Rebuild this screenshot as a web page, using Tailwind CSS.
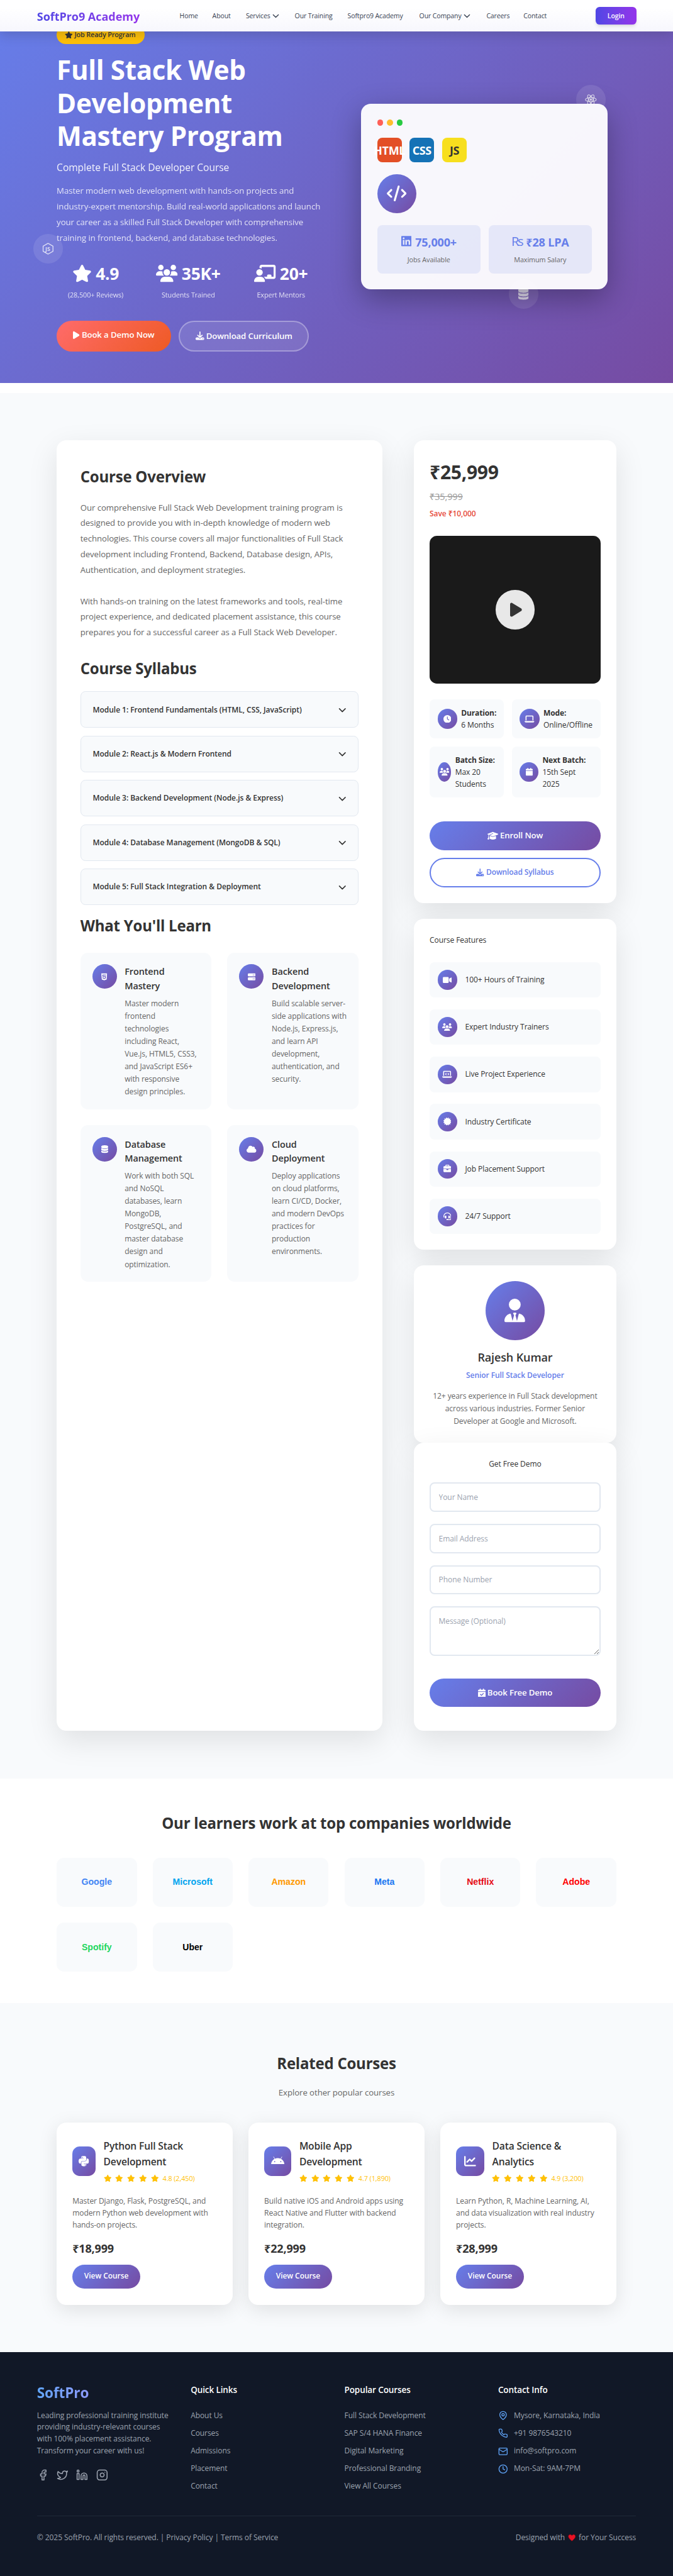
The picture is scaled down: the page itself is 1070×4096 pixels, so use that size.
<!DOCTYPE html>
<html lang="en" class="text-[12.5333px]">
<head>
<meta charset="utf-8">
<title>SoftPro9 Academy - Full Stack Web Development</title>
<script src="https://cdn.jsdelivr.net/npm/@tailwindcss/browser@4"></script>
</head>
<body class="bg-white font-['Open_Sans','Noto_Sans',sans-serif] text-[0.96rem] leading-6 tracking-[-0.006em] text-[#333] overflow-x-hidden">

<svg class="hidden">
  <symbol id="star" viewBox="0 0 576 512"><path d="M316.9 18C311.6 7 300.4 0 288.1 0s-23.4 7-28.8 18L195 150.3 51.4 171.5c-12 1.8-22 10.2-25.7 21.7s-.7 24.2 7.9 32.7L137.8 329 113.2 474.7c-2 12 3 24.2 12.9 31.3s23 8 33.8 2.3l128.3-68.5 128.3 68.5c10.8 5.7 23.9 4.9 33.8-2.3s14.9-19.3 12.9-31.3L438.5 329 542.7 225.9c8.6-8.5 11.7-21.2 7.9-32.7s-13.7-19.9-25.7-21.7L381.2 150.3 316.9 18z"/></symbol>
  <symbol id="users" viewBox="0 0 640 512"><path d="M144 0a80 80 0 1 1 0 160A80 80 0 1 1 144 0zM512 0a80 80 0 1 1 0 160A80 80 0 1 1 512 0zM0 298.7C0 239.8 47.8 192 106.7 192h42.7c15.9 0 31 3.5 44.6 9.7c-1.3 7.2-1.9 14.7-1.9 22.3c0 38.2 16.8 72.5 43.3 96c-.2 0-.4 0-.7 0H21.3C9.6 320 0 310.4 0 298.7zM405.3 320c-.2 0-.4 0-.7 0c26.6-23.5 43.3-57.8 43.3-96c0-7.6-.7-15-1.9-22.3c13.6-6.3 28.7-9.7 44.6-9.7h42.7C592.2 192 640 239.8 640 298.7c0 11.8-9.6 21.3-21.3 21.3H405.3zM224 224a96 96 0 1 1 192 0 96 96 0 1 1 -192 0zM128 485.3C128 411.7 187.7 352 261.3 352H378.7C452.3 352 512 411.7 512 485.3c0 14.7-11.9 26.7-26.7 26.7H154.7c-14.7 0-26.7-11.9-26.7-26.7z"/></symbol>
  <symbol id="teacher" viewBox="0 0 640 512"><path d="M160 64c0-35.3 28.7-64 64-64H576c35.3 0 64 28.7 64 64V352c0 35.3-28.7 64-64 64H336.8c-11.8-25.5-29.9-47.5-52.4-64H384V320c0-17.7 14.3-32 32-32h64c17.7 0 32 14.3 32 32v32h64V64L224 64v49.1C205.2 102.2 183.3 96 160 96V64zm0 64a96 96 0 1 1 0 192 96 96 0 1 1 0-192zM133.3 352h53.3C260.3 352 320 411.7 320 485.3c0 14.7-11.9 26.7-26.7 26.7H26.7C11.9 512 0 500.1 0 485.3C0 411.7 59.7 352 133.3 352z"/></symbol>
  <symbol id="play" viewBox="0 0 384 512"><path d="M73 39c-14.8-9.1-33.4-9.4-48.5-.9S0 62.6 0 80V432c0 17.4 9.4 33.4 24.5 41.9s33.7 8.1 48.5-.9L361 297c14.3-8.7 23-24.2 23-41s-8.7-32.2-23-41L73 39z"/></symbol>
  <symbol id="download" viewBox="0 0 512 512"><path d="M288 32c0-17.7-14.3-32-32-32s-32 14.3-32 32V274.7l-73.4-73.4c-12.5-12.5-32.8-12.5-45.3 0s-12.5 32.8 0 45.3l128 128c12.5 12.5 32.8 12.5 45.3 0l128-128c12.5-12.5 12.5-32.8 0-45.3s-32.8-12.5-45.3 0L288 274.7V32zM64 352c-35.3 0-64 28.7-64 64v32c0 35.3 28.7 64 64 64H448c35.3 0 64-28.7 64-64V416c0-35.3-28.7-64-64-64H346.5l-45.3 45.3c-25 25-65.5 25-90.5 0L165.5 352H64zm368 56a24 24 0 1 1 0 48 24 24 0 1 1 0-48z"/></symbol>
  <symbol id="code" viewBox="0 0 640 512"><path d="M392.8 1.2c-17-4.9-34.7 5-39.6 22l-128 448c-4.9 17 5 34.7 22 39.6s34.7-5 39.6-22l128-448c4.9-17-5-34.7-22-39.6zm80.6 120.1c-12.5 12.5-12.5 32.8 0 45.3L562.7 256l-89.4 89.4c-12.5 12.5-12.5 32.8 0 45.3s32.8 12.5 45.3 0l112-112c12.5-12.5 12.5-32.8 0-45.3l-112-112c-12.5-12.5-32.8-12.5-45.3 0zm-306.7 0c-12.5-12.5-32.8-12.5-45.3 0l-112 112c-12.5 12.5-12.5 32.8 0 45.3l112 112c12.5 12.5 32.8 12.5 45.3 0s12.5-32.8 0-45.3L77.3 256l89.4-89.4c12.5-12.5 12.5-32.8 0-45.3z"/></symbol>
  <symbol id="linkedin" viewBox="0 0 448 512"><path d="M416 32H31.9C14.3 32 0 46.5 0 64.3v383.4C0 465.5 14.3 480 31.9 480H416c17.6 0 32-14.5 32-32.3V64.3c0-17.8-14.4-32.3-32-32.3zM135.4 416H69V202.2h66.5V416zm-33.2-243c-21.3 0-38.5-17.3-38.5-38.5S80.9 96 102.2 96c21.2 0 38.5 17.3 38.5 38.5 0 21.3-17.2 38.5-38.5 38.5zm282.1 243h-66.4V312c0-24.8-.5-56.7-34.5-56.7-34.6 0-39.9 27-39.9 54.9V416h-66.4V202.2h63.7v29.2h.9c8.9-16.8 30.6-34.5 62.9-34.5 67.2 0 79.7 44.3 79.7 101.9V416z"/></symbol>
  <symbol id="clock" viewBox="0 0 512 512"><path fill-rule="evenodd" d="M256 0a256 256 0 1 1 0 512A256 256 0 1 1 256 0zM232 120V256c0 8 4 15.5 10.7 20l96 64c11 7.4 25.9 4.4 33.3-6.7s4.4-25.9-6.7-33.3L280 243.2V120c0-13.3-10.7-24-24-24s-24 10.7-24 24z"/></symbol>
  <symbol id="laptop" viewBox="0 0 640 512"><path d="M128 32C92.7 32 64 60.7 64 96V352h64V96H512V352h64V96c0-35.3-28.7-64-64-64H128zM19.2 384C8.6 384 0 392.6 0 403.2C0 445.6 34.4 480 76.8 480H563.2c42.4 0 76.8-34.4 76.8-76.8c0-10.6-8.6-19.2-19.2-19.2H19.2z"/></symbol>
  <symbol id="calendar" viewBox="0 0 448 512"><path d="M96 32V64H48C21.5 64 0 85.5 0 112v48H448V112c0-26.5-21.5-48-48-48H352V32c0-17.7-14.3-32-32-32s-32 14.3-32 32V64H160V32c0-17.7-14.3-32-32-32S96 14.3 96 32zM448 192H0V464c0 26.5 21.5 48 48 48H400c26.5 0 48-21.5 48-48V192z"/></symbol>
  <symbol id="calcheck" viewBox="0 0 448 512"><path fill-rule="evenodd" d="M96 32V64H48C21.5 64 0 85.5 0 112v48H448V112c0-26.5-21.5-48-48-48H352V32c0-17.7-14.3-32-32-32s-32 14.3-32 32V64H160V32c0-17.7-14.3-32-32-32S96 14.3 96 32zM448 192H0V464c0 26.5 21.5 48 48 48H400c26.5 0 48-21.5 48-48V192zM329 305c9.4-9.4 9.4-24.6 0-33.9s-24.6-9.4-33.9 0l-95 95-47-47c-9.4-9.4-24.6-9.4-33.9 0s-9.4 24.6 0 33.9l64 64c9.4 9.4 24.6 9.4 33.9 0L329 305z"/></symbol>
  <symbol id="cap" viewBox="0 0 640 512"><path d="M320 32c-8.1 0-16.1 1.4-23.7 4.1L15.8 137.4C6.3 140.9 0 149.9 0 160s6.3 19.1 15.8 22.6l57.9 20.9C57.3 229.3 48 259.8 48 291.9v28.1c0 28.4-10.8 57.7-22.3 80.8c-6.5 13-13.9 25.8-22.5 37.6C0 442.7-.9 448.3 .9 453.4s6 8.9 11.2 10.2l64 16c4.2 1.1 8.7 .3 12.4-2s6.3-6.1 7.1-10.4c8.6-42.8 4.3-81.2-2.1-108.7C90.3 344.3 86 329.8 80 316.5V291.9c0-30.2 10.2-58.7 27.9-81.5c12.9-15.5 29.6-28 49.2-35.7l157-61.7c8.2-3.2 17.5 .8 20.7 9s-.8 17.5-9 20.7l-157 61.7c-12.4 4.9-23.3 12.4-32.2 21.6l159.6 57.6c7.6 2.7 15.6 4.1 23.7 4.1s16.1-1.4 23.7-4.1L624.2 182.6c9.5-3.4 15.8-12.5 15.8-22.6s-6.3-19.1-15.8-22.6L343.7 36.1C336.1 33.4 328.1 32 320 32zM128 408c0 35.3 86 72 192 72s192-36.7 192-72L496.7 262.6 354.5 314c-11.1 4-22.8 6-34.5 6s-23.5-2-34.5-6L143.3 262.6 128 408z"/></symbol>
  <symbol id="video" viewBox="0 0 576 512"><path d="M0 128C0 92.7 28.7 64 64 64H320c35.3 0 64 28.7 64 64V384c0 35.3-28.7 64-64 64H64c-35.3 0-64-28.7-64-64V128zM559.1 99.8c10.4 5.6 16.9 16.4 16.9 28.2V384c0 11.8-6.5 22.6-16.9 28.2s-23 5-32.9-1.6l-96-64L416 337.1V320 192 174.9l14.2-9.5 96-64c9.8-6.5 22.4-7.2 32.9-1.6z"/></symbol>
  <symbol id="laptopcode" viewBox="0 0 640 512"><path d="M64 96c0-35.3 28.7-64 64-64H512c35.3 0 64 28.7 64 64V352H512V96H128V352H64V96zM0 403.2C0 392.6 8.6 384 19.2 384H620.8c10.6 0 19.2 8.6 19.2 19.2c0 42.4-34.4 76.8-76.8 76.8H76.8C34.4 480 0 445.6 0 403.2zM281 209l-31 31 31 31c9.4 9.4 9.4 24.6 0 33.9s-24.6 9.4-33.9 0l-48-48c-9.4-9.4-9.4-24.6 0-33.9l48-48c9.4-9.4 24.6-9.4 33.9 0s9.4 24.6 0 33.9zM393 175l48 48c9.4 9.4 9.4 24.6 0 33.9l-48 48c-9.4 9.4-24.6 9.4-33.9 0s-9.4-24.6 0-33.9l31-31-31-31c-9.4-9.4-9.4-24.6 0-33.9s24.6-9.4 33.9 0z"/></symbol>
  <symbol id="cert" viewBox="0 0 512 512"><path d="M211 7.3C205 1 196-1.4 187.6 .8s-14.9 8.9-17.1 17.3L154.7 80.6l-62-17.5c-8.4-2.4-17.4 0-23.5 6.1s-8.5 15.1-6.1 23.5l17.5 62L18.1 170.6c-8.4 2.1-15 8.7-17.3 17.1S1 205 7.3 211l46.2 45L7.3 301C1 307-1.4 316 .8 324.4s8.9 14.9 17.3 17.1l62.5 15.8-17.5 62c-2.4 8.4 0 17.4 6.1 23.5s15.1 8.5 23.5 6.1l62-17.5 15.8 62.5c2.1 8.4 8.7 15 17.1 17.3s17.3-.2 23.4-6.4l45-46.2 45 46.2c6.1 6.2 15 8.7 23.4 6.4s14.9-8.9 17.1-17.3l15.8-62.5 62 17.5c8.4 2.4 17.4 0 23.5-6.1s8.5-15.1 6.1-23.5l-17.5-62 62.5-15.8c8.4-2.1 15-8.7 17.3-17.1s-.2-17.4-6.4-23.4l-46.2-45 46.2-45c6.2-6.1 8.7-15 6.4-23.4s-8.9-14.9-17.3-17.1l-62.5-15.8 17.5-62c2.4-8.4 0-17.4-6.1-23.5s-15.1-8.5-23.5-6.1l-62 17.5L341.4 18.1c-2.1-8.4-8.7-15-17.1-17.3S307 1 301 7.3L256 53.5 211 7.3z"/></symbol>
  <symbol id="briefcase" viewBox="0 0 512 512"><path d="M184 48H328c4.4 0 8 3.6 8 8V96H176V56c0-4.4 3.6-8 8-8zm-56 8V96H64C28.7 96 0 124.7 0 160v96H192 320 512V160c0-35.3-28.7-64-64-64H384V56c0-30.9-25.1-56-56-56H184c-30.9 0-56 25.1-56 56zM512 288H320v32c0 17.7-14.3 32-32 32H224c-17.7 0-32-14.3-32-32V288H0V416c0 35.3 28.7 64 64 64H448c35.3 0 64-28.7 64-64V288z"/></symbol>
  <symbol id="headset" viewBox="0 0 512 512"><path d="M256 48C141.1 48 48 141.1 48 256v40c0 13.3-10.7 24-24 24s-24-10.7-24-24V256C0 114.6 114.6 0 256 0S512 114.6 512 256V400.1c0 48.6-39.4 88-88.1 88L313.6 488c-8.3 14.3-23.8 24-41.6 24H240c-26.5 0-48-21.5-48-48s21.5-48 48-48h32c17.8 0 33.3 9.7 41.6 24l110.4 .1c22.1 0 40-17.9 40-40V256c0-114.9-93.1-208-208-208zM144 208h16c17.7 0 32 14.3 32 32V352c0 17.7-14.3 32-32 32H144c-35.3 0-64-28.7-64-64V272c0-35.3 28.7-64 64-64zm224 0c35.3 0 64 28.7 64 64v48c0 35.3-28.7 64-64 64H352c-17.7 0-32-14.3-32-32V240c0-17.7 14.3-32 32-32h16z"/></symbol>
  <symbol id="usertie" viewBox="0 0 448 512"><path d="M96 128a128 128 0 1 0 256 0A128 128 0 1 0 96 128zm94.5 200.2l18.6 31L175.8 483.1l-36-146.9c-2-8.1-9.8-13.4-17.9-11.3C51.9 342.4 0 405.8 0 481.3c0 17 13.8 30.7 30.7 30.7H162.5c0 0 0 0 .1 0H168 280h5.5c0 0 0 0 .1 0H417.3c17 0 30.7-13.8 30.7-30.7c0-75.5-51.9-138.9-121.9-156.4c-8.1-2-15.9 3.3-17.9 11.3l-36 146.9L238.9 359.2l18.6-31c6.4-10.7-1.3-24.2-13.7-24.2H224 204.3c-12.4 0-20.1 13.6-13.7 24.2z"/></symbol>
  <symbol id="html5" viewBox="0 0 384 512"><path d="M0 32l34.9 395.8L191.5 480l157.6-52.2L384 32H0zm308.2 127.9H124.4l4.1 49.4h175.6l-13.6 148.4-97.9 27v.3h-1.1l-98.7-27.3-6-75.8h47.7L138 320l53.5 14.5 53.7-14.5 6-62.2H84.3L71.5 112.2h241.1l-4.4 47.7z"/></symbol>
  <symbol id="server" viewBox="0 0 512 512"><path d="M64 32C28.7 32 0 60.7 0 96v64c0 35.3 28.7 64 64 64H448c35.3 0 64-28.7 64-64V96c0-35.3-28.7-64-64-64H64zm280 72a24 24 0 1 1 0 48 24 24 0 1 1 0-48zm48 24a24 24 0 1 1 48 0 24 24 0 1 1 -48 0zM64 288c-35.3 0-64 28.7-64 64v64c0 35.3 28.7 64 64 64H448c35.3 0 64-28.7 64-64V352c0-35.3-28.7-64-64-64H64zm280 72a24 24 0 1 1 0 48 24 24 0 1 1 0-48zm56 24a24 24 0 1 1 48 0 24 24 0 1 1 -48 0z"/></symbol>
  <symbol id="database" viewBox="0 0 448 512"><path d="M448 80v48c0 44.2-100.3 80-224 80S0 172.2 0 128V80C0 35.8 100.3 0 224 0S448 35.8 448 80zM393.2 214.7c20.8-7.4 39.9-16.9 54.8-28.6V288c0 44.2-100.3 80-224 80S0 332.2 0 288V186.1c14.9 11.8 34 21.2 54.8 28.6C99.7 230.7 159.5 240 224 240s124.3-9.3 169.2-25.3zM0 346.1c14.9 11.8 34 21.2 54.8 28.6C99.7 390.7 159.5 400 224 400s124.3-9.3 169.2-25.3c20.8-7.4 39.9-16.9 54.8-28.6V432c0 44.2-100.3 80-224 80S0 476.2 0 432V346.1z"/></symbol>
  <symbol id="cloud" viewBox="0 0 640 512"><path d="M0 336c0 79.5 64.5 144 144 144H512c70.7 0 128-57.3 128-128c0-61.9-44-113.6-102.4-125.4c4.1-10.7 6.4-22.4 6.4-34.6c0-53-43-96-96-96c-19.7 0-38.1 6-53.3 16.2C367 64.2 315.3 32 256 32C167.6 32 96 103.6 96 192c0 2.7 .1 5.4 .2 8.1C40.2 219.8 0 273.2 0 336z"/></symbol>
  <symbol id="android" viewBox="0 0 576 512"><path d="M420.55,301.93a24,24,0,1,1,24-24,24,24,0,0,1-24,24m-265.1,0a24,24,0,1,1,24-24,24,24,0,0,1-24,24m273.7-144.48,47.94-83a10,10,0,1,0-17.27-10h0l-48.54,84.07a301.25,301.25,0,0,0-246.56,0L116.18,64.45a10,10,0,1,0-17.27,10h0l47.94,83C64.53,202.22,8.24,285.55,0,384H576c-8.24-98.45-64.54-181.78-146.85-226.55"/></symbol>
  <symbol id="chart" viewBox="0 0 512 512"><path d="M64 64c0-17.7-14.3-32-32-32S0 46.3 0 64V400c0 44.2 35.8 80 80 80H480c17.7 0 32-14.3 32-32s-14.3-32-32-32H80c-8.8 0-16-7.2-16-16V64zm406.6 86.6c12.5-12.5 12.5-32.8 0-45.3s-32.8-12.5-45.3 0L320 210.7l-57.4-57.4c-12.5-12.5-32.8-12.5-45.3 0l-112 112c-12.5 12.5-12.5 32.8 0 45.3s32.8 12.5 45.3 0L240 221.3l57.4 57.4c12.5 12.5 32.8 12.5 45.3 0l128-128z"/></symbol>
  <symbol id="python" viewBox="0 0 448 512"><path d="M439.8 200.5c-7.7-30.9-22.3-54.2-53.4-54.2h-40.1v47.4c0 36.8-31.2 67.8-66.8 67.8H172.7c-29.2 0-53.4 25-53.4 54.3v101.8c0 29 25.2 46 53.4 54.3 33.8 9.9 66.3 11.7 106.8 0 26.9-7.8 53.4-23.5 53.4-54.3v-40.7H226.2v-13.6h160.2c31.1 0 42.6-21.7 53.4-54.2 11.2-33.5 10.7-65.7 0-108.6zM286.2 404c11.1 0 20.1 9.1 20.1 20.3 0 11.3-9 20.4-20.1 20.4-11 0-20.1-9.2-20.1-20.4.1-11.3 9.1-20.3 20.1-20.3zM167.8 248.1h106.8c29.7 0 53.4-24.5 53.4-54.3V91.9c0-29-24.4-50.7-53.4-55.6-35.8-5.9-74.7-5.6-106.8.1-45.2 8-53.4 24.7-53.4 55.6v40.7h106.9v13.6h-147c-31.1 0-58.3 18.7-66.8 54.2-9.8 40.7-10.2 66.1 0 108.6 7.6 31.6 25.7 54.2 56.8 54.2H101v-48.8c0-35.3 30.5-66.4 66.8-66.4zm-6.7-142.6c-11.1 0-20.1-9.1-20.1-20.3.1-11.3 9-20.4 20.1-20.4 11 0 20.1 9.2 20.1 20.4s-9 20.3-20.1 20.3z"/></symbol>
  <symbol id="chevron" viewBox="0 0 16 16"><path d="M2 5l6 6 6-6" fill="none" stroke="currentColor" stroke-width="2" stroke-linecap="round" stroke-linejoin="round"/></symbol>
</svg>

<!-- Navigation -->
<header class="absolute inset-x-0 top-0 z-20 flex h-16 items-center bg-linear-to-b from-white from-25% to-[#f7f7fd] pl-[4.69rem] shadow-[0_0.4rem_1.5rem_rgba(40,40,60,0.22)]">
  <div class="w-[18.1rem] pt-1"><span class="bg-linear-to-r from-[#4f46e5] to-[#9333ea] bg-clip-text text-[1.44rem] leading-8 font-bold tracking-[-0.003em] whitespace-nowrap text-transparent">SoftPro9 Academy</span></div>
  <nav class="flex w-[52.75rem] items-center pt-px text-[0.84rem] font-medium tracking-[-0.012em] whitespace-nowrap text-[#374151]">
    <a class="w-[4.15rem]">Home</a>
    <a class="w-[4.25rem]">About</a>
    <a class="flex w-[6.2rem] items-center gap-1">Services <svg class="size-3.5"><use href="#chevron"/></svg></a>
    <a class="w-[6.7rem]">Our Training</a>
    <a class="w-[9.1rem]">Softpro9 Academy</a>
    <a class="flex w-[8.52rem] items-center gap-1">Our Company <svg class="size-3.5"><use href="#chevron"/></svg></a>
    <a class="w-[4.7rem]">Careers</a>
    <a>Contact</a>
  </nav>
  <a class="flex h-9 w-[5.2rem] items-center justify-center rounded-lg bg-linear-to-r from-[#4f46e5] to-[#9333ea] text-[0.84rem] font-semibold tracking-[-0.01em] text-white shadow-md">Login</a>
</header>

<!-- Hero -->
<section class="relative bg-[linear-gradient(135deg,#667eea_0%,#764ba2_100%)] px-[7.19rem] pt-13 pb-16 text-white">
  <div class="absolute top-[29.7rem] left-[4.25rem] flex size-15 items-center justify-center rounded-full bg-white/10 text-white/75">
    <svg class="size-6" viewBox="0 0 24 24"><path d="M12 1.2l10 5.6v10.6l-10 5.6-3.2-1.8M8.8 21.2L2 17.4V6.8L12 1.2" fill="none" stroke="currentColor" stroke-width="1.7"/><text x="6.5" y="16" font-size="11" font-weight="700" letter-spacing="0" fill="currentColor">JS</text></svg>
  </div>
  <div class="absolute top-43 left-[73.1rem] flex size-15 items-center justify-center rounded-full bg-white/10 text-white/75">
    <svg class="size-6" viewBox="0 0 24 24" fill="none" stroke="currentColor" stroke-width="1.5"><circle cx="12" cy="12" r="2.3" fill="currentColor" stroke="none"/><ellipse cx="12" cy="12" rx="11" ry="4.3"/><ellipse cx="12" cy="12" rx="11" ry="4.3" transform="rotate(60 12 12)"/><ellipse cx="12" cy="12" rx="11" ry="4.3" transform="rotate(120 12 12)"/></svg>
  </div>
  <div class="absolute top-[35.4rem] left-[64.55rem] flex size-15 items-center justify-center rounded-full bg-white/10 text-white/75">
    <svg class="h-6 w-[1.31rem] fill-current"><use href="#database"/></svg>
  </div>
  <div class="relative flex justify-between">
    <div class="w-[33.4rem]">
      <div class="flex h-[2.375rem] w-[11.2rem] items-center gap-1 rounded-[1.25rem] bg-[#ffc107] pl-4 text-[0.864rem] font-semibold tracking-[-0.012em] whitespace-nowrap text-[#333]"><svg class="h-[0.9rem] w-[1.01rem] fill-current"><use href="#star"/></svg>Job Ready Program</div>
      <h1 class="mt-[1.15rem] text-[3.36rem] leading-[4.2rem] font-bold tracking-[-0.008em] whitespace-nowrap">Full Stack Web<br>Development<br>Mastery Program</h1>
      <p class="mt-[0.92rem] text-[1.248rem] leading-[1.95rem] whitespace-nowrap opacity-90">Complete Full Stack Developer Course</p>
      <p class="mt-4 text-[1.056rem] leading-[1.98rem] whitespace-nowrap opacity-80">Master modern web development with hands-on projects and<br>industry-expert mentorship. Build real-world applications and launch<br>your career as a skilled Full Stack Developer with comprehensive<br>training in frontend, backend, and database technologies.</p>
      <div class="mt-[1.9rem] grid grid-cols-3 gap-7.5 text-center">
        <div>
          <div class="flex h-13 items-center justify-center gap-2 text-[2.112rem] font-bold tracking-[-0.01em]"><svg class="h-[2.2rem] w-[2.475rem] fill-current"><use href="#star"/></svg><span class="pt-0.5">4.9</span></div>
          <div class="mt-2 text-[0.864rem] leading-[1.35rem] opacity-80">(28,500+ Reviews)</div>
        </div>
        <div>
          <div class="flex h-13 items-center justify-center gap-2 text-[2.112rem] font-bold tracking-[-0.01em]"><svg class="h-[2.2rem] w-[2.75rem] fill-current"><use href="#users"/></svg><span class="pt-0.5">35K+</span></div>
          <div class="mt-2 text-[0.864rem] leading-[1.35rem] opacity-80">Students Trained</div>
        </div>
        <div>
          <div class="flex h-13 items-center justify-center gap-2 text-[2.112rem] font-bold tracking-[-0.01em]"><svg class="h-[2.2rem] w-[2.75rem] fill-current"><use href="#teacher"/></svg><span class="pt-0.5">20+</span></div>
          <div class="mt-2 text-[0.864rem] leading-[1.35rem] opacity-80">Expert Mentors</div>
        </div>
      </div>
      <div class="mt-10 flex gap-4 text-[1.056rem] font-semibold tracking-[-0.01em] whitespace-nowrap">
        <a class="flex h-[3.95rem] w-[14.5rem] items-center justify-center gap-1 rounded-full bg-[linear-gradient(135deg,#ff6b6b,#ee5a24)] pb-1"><svg class="h-[1.1rem] w-[0.825rem] fill-current"><use href="#play"/></svg>Book a Demo Now</a>
        <a class="flex h-[3.95rem] w-[16.5rem] items-center justify-center gap-1 rounded-full border-2 border-white/30 bg-white/10"><svg class="size-[1.1rem] fill-current"><use href="#download"/></svg>Download Curriculum</a>
      </div>
    </div>
    <div class="mt-[9.94rem] mr-[1.1rem] h-[23.5rem] w-[31.25rem] rounded-[1.25rem] bg-white/95 p-8 text-[#333] shadow-[0_1.25rem_3.75rem_rgba(0,0,0,0.3)]">
      <div class="flex gap-2"><i class="size-3 rounded-full bg-[#ff5f57]"></i><i class="size-3 rounded-full bg-[#ffbd2e]"></i><i class="size-3 rounded-full bg-[#28ca42]"></i></div>
      <div class="mt-6 flex gap-4 text-[1.44rem] font-bold tracking-[-0.02em] text-white">
        <div class="flex size-12.5 items-center justify-center rounded-[0.625rem] bg-[#e34f26] pt-0.5">HTML</div>
        <div class="flex size-12.5 items-center justify-center rounded-[0.625rem] bg-[#1572b6] pt-0.5">CSS</div>
        <div class="flex size-12.5 items-center justify-center rounded-[0.625rem] bg-[#f7df1e] pt-0.5 text-[#333]">JS</div>
      </div>
      <div class="mt-6 flex size-20 items-center justify-center rounded-full bg-[linear-gradient(135deg,#667eea,#764ba2)]"><svg class="h-8 w-10 fill-white"><use href="#code"/></svg></div>
      <div class="mt-6 grid grid-cols-2 gap-4 text-center">
        <div class="h-[6.125rem] rounded-[0.625rem] bg-[#667eea]/12 pt-4">
          <div class="flex h-9 items-center justify-center gap-2 pt-px text-[1.44rem] font-bold tracking-[-0.01em] text-[#667eea]"><svg class="mb-1 h-6 w-[1.31rem] fill-current"><use href="#linkedin"/></svg>75,000+</div>
          <div class="mt-2 text-[0.864rem] leading-[1.35rem] text-[#666]">Jobs Available</div>
        </div>
        <div class="h-[6.125rem] rounded-[0.625rem] bg-[#667eea]/12 pt-4">
          <div class="flex h-9 items-center justify-center gap-2 pt-px text-[1.44rem] font-bold tracking-[-0.01em] text-[#667eea]"><span class="mb-0.5 text-[1.6rem] font-medium tracking-[-0.12em]">Rs</span><span>₹28 LPA</span></div>
          <div class="mt-2 text-[0.864rem] leading-[1.35rem] text-[#666]">Maximum Salary</div>
        </div>
      </div>
    </div>
  </div>
</section>

<!-- Course content -->
<main class="mt-5 flex gap-16 bg-[#f8fafc] px-[7.19rem] pt-24 pb-[6.06rem]">
  <section class="w-[41.31rem] rounded-[1.25rem] bg-white p-12 shadow-[0_1.25rem_3.75rem_rgba(0,0,0,0.1)]">
    <h2 class="h-12 pt-[0.1rem] text-[1.92rem] leading-12 font-bold tracking-[-0.01em]">Course Overview</h2>
    <p class="mt-[1.55rem] text-[1.056rem] leading-[1.98rem] whitespace-nowrap text-[#666]">Our comprehensive Full Stack Web Development training program is<br>designed to provide you with in-depth knowledge of modern web<br>technologies. This course covers all major functionalities of Full Stack<br>development including Frontend, Backend, Database design, APIs,<br>Authentication, and deployment strategies.<br><br>With hands-on training on the latest frameworks and tools, real-time<br>project experience, and dedicated placement assistance, this course<br>prepares you for a successful career as a Full Stack Web Developer.</p>
    <h2 class="mt-8 h-12 pt-[0.08rem] text-[1.92rem] leading-12 font-bold tracking-[-0.01em]">Course Syllabus</h2>
    <div class="mt-6 flex flex-col gap-4 font-semibold tracking-[-0.004em]">
      <div class="flex h-18.5 items-center justify-between rounded-[0.625rem] border border-[#e2e8f0] bg-[#f8fafc] px-6 pt-px">Module 1: Frontend Fundamentals (HTML, CSS, JavaScript)<svg class="size-4"><use href="#chevron"/></svg></div>
      <div class="flex h-18.5 items-center justify-between rounded-[0.625rem] border border-[#e2e8f0] bg-[#f8fafc] px-6 pt-px">Module 2: React.js &amp; Modern Frontend<svg class="size-4"><use href="#chevron"/></svg></div>
      <div class="flex h-18.5 items-center justify-between rounded-[0.625rem] border border-[#e2e8f0] bg-[#f8fafc] px-6 pt-px">Module 3: Backend Development (Node.js &amp; Express)<svg class="size-4"><use href="#chevron"/></svg></div>
      <div class="flex h-18.5 items-center justify-between rounded-[0.625rem] border border-[#e2e8f0] bg-[#f8fafc] px-6 pt-px">Module 4: Database Management (MongoDB &amp; SQL)<svg class="size-4"><use href="#chevron"/></svg></div>
      <div class="flex h-18.5 items-center justify-between rounded-[0.625rem] border border-[#e2e8f0] bg-[#f8fafc] px-6 pt-px">Module 5: Full Stack Integration &amp; Deployment<svg class="size-4"><use href="#chevron"/></svg></div>
    </div>
    <h2 class="mt-4 h-12 pt-[0.08rem] text-[1.92rem] leading-12 font-bold tracking-[-0.01em]">What You'll Learn</h2>
    <div class="mt-8 grid grid-cols-2 gap-8 whitespace-nowrap">
      <div class="flex h-[19.9rem] gap-4 rounded-[0.94rem] bg-[#f8fafc] p-6">
        <div class="flex size-12.5 shrink-0 items-center justify-center rounded-full bg-[linear-gradient(135deg,#667eea,#764ba2)]"><svg class="h-4 w-3 fill-white"><use href="#html5"/></svg></div>
        <div class="pt-px"><h3 class="text-[1.152rem] leading-[1.8rem] font-semibold tracking-[-0.006em]">Frontend<br>Mastery</h3><p class="mt-2 leading-[1.6rem] text-[#666]">Master modern<br>frontend<br>technologies<br>including React,<br>Vue.js, HTML5, CSS3,<br>and JavaScript ES6+<br>with responsive<br>design principles.</p></div>
      </div>
      <div class="flex h-[19.9rem] gap-4 rounded-[0.94rem] bg-[#f8fafc] p-6">
        <div class="flex size-12.5 shrink-0 items-center justify-center rounded-full bg-[linear-gradient(135deg,#667eea,#764ba2)]"><svg class="size-4 fill-white"><use href="#server"/></svg></div>
        <div class="pt-px"><h3 class="text-[1.152rem] leading-[1.8rem] font-semibold tracking-[-0.006em]">Backend<br>Development</h3><p class="mt-2 leading-[1.6rem] text-[#666]">Build scalable server-<br>side applications with<br>Node.js, Express.js,<br>and learn API<br>development,<br>authentication, and<br>security.</p></div>
      </div>
      <div class="flex h-[19.9rem] gap-4 rounded-[0.94rem] bg-[#f8fafc] p-6">
        <div class="flex size-12.5 shrink-0 items-center justify-center rounded-full bg-[linear-gradient(135deg,#667eea,#764ba2)]"><svg class="h-4 w-3.5 fill-white"><use href="#database"/></svg></div>
        <div class="pt-px"><h3 class="text-[1.152rem] leading-[1.8rem] font-semibold tracking-[-0.006em]">Database<br>Management</h3><p class="mt-2 leading-[1.6rem] text-[#666]">Work with both SQL<br>and NoSQL<br>databases, learn<br>MongoDB,<br>PostgreSQL, and<br>master database<br>design and<br>optimization.</p></div>
      </div>
      <div class="flex h-[19.9rem] gap-4 rounded-[0.94rem] bg-[#f8fafc] p-6">
        <div class="flex size-12.5 shrink-0 items-center justify-center rounded-full bg-[linear-gradient(135deg,#667eea,#764ba2)]"><svg class="h-4 w-5 fill-white"><use href="#cloud"/></svg></div>
        <div class="pt-px"><h3 class="text-[1.152rem] leading-[1.8rem] font-semibold tracking-[-0.006em]">Cloud<br>Deployment</h3><p class="mt-2 leading-[1.6rem] text-[#666]">Deploy applications<br>on cloud platforms,<br>learn CI/CD, Docker,<br>and modern DevOps<br>practices for<br>production<br>environments.</p></div>
      </div>
    </div>
  </section>

  <aside class="w-[25.69rem]">
    <div class="h-[58.7rem] rounded-[1.25rem] bg-white p-8 shadow-[0_1.25rem_3.75rem_rgba(0,0,0,0.1)]">
      <div class="h-15 pt-[0.12rem] text-[2.4rem] leading-15 font-bold tracking-[-0.01em]">₹25,999</div>
      <div class="mt-[0.55rem] text-[1.152rem] leading-[1.8rem] text-[#999] line-through">₹35,999</div>
      <div class="mt-2 font-semibold tracking-[-0.006em] text-[#e74c3c]">Save ₹10,000</div>
      <div class="mt-8 flex h-75 items-center justify-center rounded-[0.94rem] bg-[#1a1a1a]"><div class="flex size-20 items-center justify-center rounded-full bg-white/90 pl-1"><svg class="h-8 w-6 fill-[#333]"><use href="#play"/></svg></div></div>
      <div class="mt-8 grid grid-cols-[9.44rem_11.25rem] grid-rows-[5rem_6.5rem] gap-4 whitespace-nowrap">
        <div class="flex items-center gap-2 rounded-[0.625rem] bg-[#f8fafc] pl-4"><div class="flex h-10 w-10 items-center justify-center rounded-full bg-[linear-gradient(135deg,#667eea,#764ba2)]"><svg class="size-4 fill-white"><use href="#clock"/></svg></div><p class="pt-px"><b class="tracking-[-0.01em]">Duration:</b><br>6 Months</p></div>
        <div class="flex items-center gap-2 rounded-[0.625rem] bg-[#f8fafc] pl-4"><div class="flex h-10 w-10 items-center justify-center rounded-full bg-[linear-gradient(135deg,#667eea,#764ba2)]"><svg class="h-4 w-5 fill-white"><use href="#laptop"/></svg></div><p class="pt-px"><b class="tracking-[-0.01em]">Mode:</b><br>Online/Offline</p></div>
        <div class="flex items-center gap-2 rounded-[0.625rem] bg-[#f8fafc] pl-4"><div class="flex h-10 w-7 items-center justify-center rounded-[50%] bg-[linear-gradient(135deg,#667eea,#764ba2)]"><svg class="h-4 w-5 shrink-0 fill-white"><use href="#users"/></svg></div><p class="pt-px"><b class="tracking-[-0.01em]">Batch Size:</b><br>Max 20<br>Students</p></div>
        <div class="flex items-center gap-2 rounded-[0.625rem] bg-[#f8fafc] pl-4"><div class="flex h-10 w-9.5 items-center justify-center rounded-[50%] bg-[linear-gradient(135deg,#667eea,#764ba2)]"><svg class="h-4 w-3.5 fill-white"><use href="#calendar"/></svg></div><p class="pt-px"><b class="tracking-[-0.01em]">Next Batch:</b><br>15th Sept<br>2025</p></div>
      </div>
      <a class="mt-12 flex h-[3.65rem] items-center justify-center gap-1 rounded-full bg-[linear-gradient(135deg,#667eea,#764ba2)] text-[1.056rem] font-semibold tracking-[-0.01em] text-white"><svg class="h-[1.1rem] w-[1.375rem] fill-current"><use href="#cap"/></svg>Enroll Now</a>
      <a class="mt-4 flex h-15 items-center justify-center gap-1 rounded-full border-2 border-[#667eea] font-semibold tracking-[-0.01em] text-[#667eea]"><svg class="size-4 fill-current"><use href="#download"/></svg>Download Syllabus</a>
    </div>

    <div class="mt-8 h-[41.95rem] rounded-[1.25rem] bg-white p-8 shadow-[0_1.25rem_3.75rem_rgba(0,0,0,0.1)]">
      <h3>Course Features</h3>
      <ul class="mt-8 flex flex-col gap-6">
        <li class="flex h-18 items-center gap-4 rounded-[0.625rem] bg-[#f8fafc] px-4"><span class="flex size-10 items-center justify-center rounded-full bg-[linear-gradient(135deg,#667eea,#764ba2)]"><svg class="h-4 w-4.5 fill-white"><use href="#video"/></svg></span><span class="pt-px">100+ Hours of Training</span></li>
        <li class="flex h-18 items-center gap-4 rounded-[0.625rem] bg-[#f8fafc] px-4"><span class="flex size-10 items-center justify-center rounded-full bg-[linear-gradient(135deg,#667eea,#764ba2)]"><svg class="h-4 w-5 fill-white"><use href="#users"/></svg></span><span class="pt-px">Expert Industry Trainers</span></li>
        <li class="flex h-18 items-center gap-4 rounded-[0.625rem] bg-[#f8fafc] px-4"><span class="flex size-10 items-center justify-center rounded-full bg-[linear-gradient(135deg,#667eea,#764ba2)]"><svg class="h-4 w-5 fill-white"><use href="#laptopcode"/></svg></span><span class="pt-px">Live Project Experience</span></li>
        <li class="flex h-18 items-center gap-4 rounded-[0.625rem] bg-[#f8fafc] px-4"><span class="flex size-10 items-center justify-center rounded-full bg-[linear-gradient(135deg,#667eea,#764ba2)]"><svg class="size-4 fill-white"><use href="#cert"/></svg></span><span class="pt-px">Industry Certificate</span></li>
        <li class="flex h-18 items-center gap-4 rounded-[0.625rem] bg-[#f8fafc] px-4"><span class="flex size-10 items-center justify-center rounded-full bg-[linear-gradient(135deg,#667eea,#764ba2)]"><svg class="size-4 fill-white"><use href="#briefcase"/></svg></span><span class="pt-px">Job Placement Support</span></li>
        <li class="flex h-18 items-center gap-4 rounded-[0.625rem] bg-[#f8fafc] px-4"><span class="flex size-10 items-center justify-center rounded-full bg-[linear-gradient(135deg,#667eea,#764ba2)]"><svg class="size-4 fill-white"><use href="#headset"/></svg></span><span class="pt-px">24/7 Support</span></li>
      </ul>
    </div>

    <div class="mt-8 flex h-[22.55rem] flex-col items-center rounded-[1.25rem] bg-white p-8 text-center whitespace-nowrap shadow-[0_1.25rem_3.75rem_rgba(0,0,0,0.1)]">
      <div class="flex size-30 shrink-0 items-center justify-center rounded-full bg-[linear-gradient(135deg,#667eea,#764ba2)]"><svg class="h-12 w-10.5 fill-white"><use href="#usertie"/></svg></div>
      <h3 class="mt-[1.06rem] text-[1.44rem] leading-9 font-semibold tracking-[-0.008em]">Rajesh Kumar</h3>
      <p class="mt-2 font-semibold tracking-[-0.006em] text-[#667eea]">Senior Full Stack Developer</p>
      <p class="mt-4 leading-[1.6rem] text-[#666]">12+ years experience in Full Stack development<br>across various industries. Former Senior<br>Developer at Google and Microsoft.</p>
    </div>

    <form class="h-[36.55rem] rounded-[1.25rem] bg-white p-8 shadow-[0_1.25rem_3.75rem_rgba(0,0,0,0.1)]">
      <h3 class="text-center">Get Free Demo</h3>
      <div class="mt-6 flex flex-col gap-6">
        <input class="h-15 rounded-[0.625rem] border-2 border-[#e2e8f0] px-4 placeholder:text-[#9ca3af]" placeholder="Your Name">
        <input class="h-15 rounded-[0.625rem] border-2 border-[#e2e8f0] px-4 placeholder:text-[#9ca3af]" placeholder="Email Address">
        <input class="h-15 rounded-[0.625rem] border-2 border-[#e2e8f0] px-4 placeholder:text-[#9ca3af]" placeholder="Phone Number">
        <textarea class="h-25 rounded-[0.625rem] border-2 border-[#e2e8f0] p-4 placeholder:text-[#9ca3af]" placeholder="Message (Optional)"></textarea>
      </div>
      <button type="button" class="mt-11.5 flex h-[3.65rem] w-full items-center justify-center gap-1 rounded-full bg-[linear-gradient(135deg,#667eea,#764ba2)] text-[1.056rem] font-semibold tracking-[-0.01em] text-white"><svg class="h-[1.1rem] w-[0.97rem] fill-current"><use href="#calcheck"/></svg>Book Free Demo</button>
    </form>
  </aside>
</main>

<!-- Companies -->
<section class="h-[28.5rem] px-[7.19rem] pt-16">
  <h2 class="h-12 pt-[0.1rem] text-center text-[1.92rem] leading-12 font-bold tracking-[-0.01em]">Our learners work at top companies worldwide</h2>
  <div class="mt-12 grid grid-cols-6 gap-8 font-['Liberation_Sans',Arial,sans-serif] text-[1.125rem] font-bold tracking-normal">
    <div class="flex h-25 items-center justify-center rounded-[0.94rem] bg-[#f8fafc] text-[#4285f4]">Google</div>
    <div class="flex h-25 items-center justify-center rounded-[0.94rem] bg-[#f8fafc] text-[#00a4ef]">Microsoft</div>
    <div class="flex h-25 items-center justify-center rounded-[0.94rem] bg-[#f8fafc] text-[#ff9900]">Amazon</div>
    <div class="flex h-25 items-center justify-center rounded-[0.94rem] bg-[#f8fafc] text-[#1877f2]">Meta</div>
    <div class="flex h-25 items-center justify-center rounded-[0.94rem] bg-[#f8fafc] text-[#e50914]">Netflix</div>
    <div class="flex h-25 items-center justify-center rounded-[0.94rem] bg-[#f8fafc] text-[#ff0000]">Adobe</div>
    <div class="flex h-25 items-center justify-center rounded-[0.94rem] bg-[#f8fafc] text-[#1ed760]">Spotify</div>
    <div class="flex h-25 items-center justify-center rounded-[0.94rem] bg-[#f8fafc] text-black">Uber</div>
  </div>
</section>

<!-- Related courses -->
<section class="h-[44.25rem] bg-[#f8fafc] px-[7.19rem] pt-24">
  <h2 class="h-12 pt-[0.1rem] text-center text-[1.92rem] leading-12 font-bold tracking-[-0.01em]">Related Courses</h2>
  <p class="mt-6 text-center text-[1.056rem] leading-[1.65rem] text-[#666]">Explore other popular courses</p>
  <div class="mt-12 grid grid-cols-3 gap-8 whitespace-nowrap">
    <article class="h-[23.1rem] rounded-[1.25rem] bg-white p-8 shadow-[0_0.625rem_2.5rem_rgba(0,0,0,0.1)]">
      <div class="flex h-[6.25rem] gap-4">
        <div class="mt-4 flex h-15 w-[2.94rem] items-center justify-center rounded-[0.94rem] bg-[linear-gradient(135deg,#667eea,#764ba2)]"><svg class="h-6 w-5.25 fill-white"><use href="#python"/></svg></div>
        <div><h3 class="text-[1.248rem] leading-[1.95rem] font-semibold tracking-[-0.01em]">Python Full Stack<br>Development</h3>
        <div class="mt-2 flex items-center gap-2 text-[0.864rem] leading-[1.35rem] text-[#ffc107]"><svg class="h-[0.9rem] w-4 fill-current"><use href="#star"/></svg><svg class="h-[0.9rem] w-4 fill-current"><use href="#star"/></svg><svg class="h-[0.9rem] w-4 fill-current"><use href="#star"/></svg><svg class="h-[0.9rem] w-4 fill-current"><use href="#star"/></svg><svg class="h-[0.9rem] w-4 fill-current"><use href="#star"/></svg>4.8 (2,450)</div></div>
      </div>
      <p class="mt-4 text-[#666]">Master Django, Flask, PostgreSQL, and<br>modern Python web development with<br>hands-on projects.</p>
      <div class="mt-4 h-9 pt-px text-[1.44rem] leading-9 font-bold tracking-[-0.01em]">₹18,999</div>
      <a class="mt-4 flex h-12 w-[8.6rem] items-center justify-center rounded-full bg-[linear-gradient(135deg,#667eea,#764ba2)] font-semibold tracking-[-0.006em] text-white">View Course</a>
    </article>
    <article class="h-[23.1rem] rounded-[1.25rem] bg-white p-8 shadow-[0_0.625rem_2.5rem_rgba(0,0,0,0.1)]">
      <div class="flex h-[6.25rem] gap-4">
        <div class="mt-4 flex h-15 w-[3.45rem] items-center justify-center rounded-[0.94rem] bg-[linear-gradient(135deg,#667eea,#764ba2)]"><svg class="h-6 w-6.75 fill-white"><use href="#android"/></svg></div>
        <div><h3 class="text-[1.248rem] leading-[1.95rem] font-semibold tracking-[-0.01em]">Mobile App<br>Development</h3>
        <div class="mt-2 flex items-center gap-2 text-[0.864rem] leading-[1.35rem] text-[#ffc107]"><svg class="h-[0.9rem] w-4 fill-current"><use href="#star"/></svg><svg class="h-[0.9rem] w-4 fill-current"><use href="#star"/></svg><svg class="h-[0.9rem] w-4 fill-current"><use href="#star"/></svg><svg class="h-[0.9rem] w-4 fill-current"><use href="#star"/></svg><svg class="h-[0.9rem] w-4 fill-current"><use href="#star"/></svg>4.7 (1,890)</div></div>
      </div>
      <p class="mt-4 text-[#666]">Build native iOS and Android apps using<br>React Native and Flutter with backend<br>integration.</p>
      <div class="mt-4 h-9 pt-px text-[1.44rem] leading-9 font-bold tracking-[-0.01em]">₹22,999</div>
      <a class="mt-4 flex h-12 w-[8.6rem] items-center justify-center rounded-full bg-[linear-gradient(135deg,#667eea,#764ba2)] font-semibold tracking-[-0.006em] text-white">View Course</a>
    </article>
    <article class="h-[23.1rem] rounded-[1.25rem] bg-white p-8 shadow-[0_0.625rem_2.5rem_rgba(0,0,0,0.1)]">
      <div class="flex h-[6.25rem] gap-4">
        <div class="mt-4 flex h-15 w-[3.58rem] items-center justify-center rounded-[0.94rem] bg-[linear-gradient(135deg,#667eea,#764ba2)]"><svg class="size-6 fill-white"><use href="#chart"/></svg></div>
        <div><h3 class="text-[1.248rem] leading-[1.95rem] font-semibold tracking-[-0.01em]">Data Science &amp;<br>Analytics</h3>
        <div class="mt-2 flex items-center gap-2 text-[0.864rem] leading-[1.35rem] text-[#ffc107]"><svg class="h-[0.9rem] w-4 fill-current"><use href="#star"/></svg><svg class="h-[0.9rem] w-4 fill-current"><use href="#star"/></svg><svg class="h-[0.9rem] w-4 fill-current"><use href="#star"/></svg><svg class="h-[0.9rem] w-4 fill-current"><use href="#star"/></svg><svg class="h-[0.9rem] w-4 fill-current"><use href="#star"/></svg>4.9 (3,200)</div></div>
      </div>
      <p class="mt-4 text-[#666]">Learn Python, R, Machine Learning, AI,<br>and data visualization with real industry<br>projects.</p>
      <div class="mt-4 h-9 pt-px text-[1.44rem] leading-9 font-bold tracking-[-0.01em]">₹28,999</div>
      <a class="mt-4 flex h-12 w-[8.6rem] items-center justify-center rounded-full bg-[linear-gradient(135deg,#667eea,#764ba2)] font-semibold tracking-[-0.006em] text-white">View Course</a>
    </article>
  </div>
</section>

<!-- Footer -->
<footer class="h-[28.4rem] bg-[#111827] px-[4.69rem] pt-16 text-[#9ca3af]">
  <div class="grid h-[16.8rem] grid-cols-4 gap-8 border-b border-[#1f2937] whitespace-nowrap">
    <div>
      <div class="h-9 bg-linear-to-r from-[#60a5fa] to-[#c084fc] bg-clip-text pt-px text-[1.8rem] leading-9 font-bold tracking-[-0.004em] text-transparent">SoftPro</div>
      <p class="mt-[1.06rem]">Leading professional training institute<br>providing industry-relevant courses<br>with 100% placement assistance.<br>Transform your career with us!</p>
      <div class="mt-6 flex gap-4">
        <svg class="size-6" viewBox="0 0 24 24" fill="none" stroke="currentColor" stroke-width="2" stroke-linecap="round" stroke-linejoin="round"><path d="M18 2h-3a5 5 0 0 0-5 5v3H7v4h3v8h4v-8h3l1-4h-4V7a1 1 0 0 1 1-1h3z"/></svg>
        <svg class="size-6" viewBox="0 0 24 24" fill="none" stroke="currentColor" stroke-width="2" stroke-linecap="round" stroke-linejoin="round"><path d="M22 4s-.7 2.1-2 3.4c1.6 10-9.4 17.3-18 11.6 2.2.1 4.4-.6 6-2C3 15.500.500 9.600 3 5c2.200 2.600 5.600 4.100 9 4-.9-4.200 4-6.600 7-3.800 1.100 0 3-1.200 3-1.200z"/></svg>
        <svg class="size-6" viewBox="0 0 24 24" fill="none" stroke="currentColor" stroke-width="2" stroke-linecap="round" stroke-linejoin="round"><path d="M16 8a6 6 0 0 1 6 6v7h-4v-7a2 2 0 0 0-2-2 2 2 0 0 0-2 2v7h-4v-7a6 6 0 0 1 6-6z"/><rect x="2" y="9" width="4" height="12"/><circle cx="4" cy="4" r="2"/></svg>
        <svg class="size-6" viewBox="0 0 24 24" fill="none" stroke="currentColor" stroke-width="2" stroke-linecap="round" stroke-linejoin="round"><rect x="2" y="2" width="20" height="20" rx="5"/><path d="M16 11.37A4 4 0 1 1 12.63 8 4 4 0 0 1 16 11.37zM17.5 6.5h.01"/></svg>
      </div>
    </div>
    <div><h4 class="mb-[1.56rem] text-[1.08rem] leading-7 font-semibold tracking-[-0.008em] text-white">Quick Links</h4><ul class="flex flex-col gap-3"><li>About Us</li><li>Courses</li><li>Admissions</li><li>Placement</li><li>Contact</li></ul></div>
    <div><h4 class="mb-[1.56rem] text-[1.08rem] leading-7 font-semibold tracking-[-0.008em] text-white">Popular Courses</h4><ul class="flex flex-col gap-3"><li>Full Stack Development</li><li>SAP S/4 HANA Finance</li><li>Digital Marketing</li><li>Professional Branding</li><li>View All Courses</li></ul></div>
    <div><h4 class="mb-[1.56rem] text-[1.08rem] leading-7 font-semibold tracking-[-0.008em] text-white">Contact Info</h4><ul class="flex flex-col gap-3">
      <li class="flex items-center gap-3"><svg class="size-5 text-[#60a5fa]" viewBox="0 0 24 24" fill="none" stroke="currentColor" stroke-width="2" stroke-linecap="round" stroke-linejoin="round"><path d="M20 10c0 6-8 12-8 12s-8-6-8-12a8 8 0 0 1 16 0z"/><circle cx="12" cy="10" r="3"/></svg>Mysore, Karnataka, India</li>
      <li class="flex items-center gap-3"><svg class="size-5 text-[#60a5fa]" viewBox="0 0 24 24" fill="none" stroke="currentColor" stroke-width="2" stroke-linecap="round" stroke-linejoin="round"><path d="M22 16.92v3a2 2 0 0 1-2.18 2 19.79 19.79 0 0 1-8.63-3.07 19.5 19.5 0 0 1-6-6 19.79 19.79 0 0 1-3.07-8.67A2 2 0 0 1 4.11 2h3a2 2 0 0 1 2 1.72 12.84 12.84 0 0 0 .7 2.81 2 2 0 0 1-.45 2.11L8.09 9.91a16 16 0 0 0 6 6l1.27-1.27a2 2 0 0 1 2.11-.45 12.84 12.84 0 0 0 2.81.7A2 2 0 0 1 22 16.92z"/></svg>+91 9876543210</li>
      <li class="flex items-center gap-3"><svg class="size-5 text-[#60a5fa]" viewBox="0 0 24 24" fill="none" stroke="currentColor" stroke-width="2" stroke-linecap="round" stroke-linejoin="round"><rect x="2" y="4" width="20" height="16" rx="2"/><path d="M22 7l-8.97 5.7a1.94 1.94 0 0 1-2.06 0L2 7"/></svg>info@softpro.com</li>
      <li class="flex items-center gap-3"><svg class="size-5 text-[#60a5fa]" viewBox="0 0 24 24" fill="none" stroke="currentColor" stroke-width="2" stroke-linecap="round" stroke-linejoin="round"><circle cx="12" cy="12" r="10"/><path d="M12 6v6l4 2"/></svg>Mon-Sat: 9AM-7PM</li>
    </ul></div>
  </div>
  <div class="flex justify-between pt-8"><span>© 2025 SoftPro. All rights reserved. | Privacy Policy | Terms of Service</span><span class="flex items-center gap-1">Designed with <svg class="mx-0.5 size-4" viewBox="0 0 24 24"><path d="M12 22C5 16 1 12 1 7.500A5.800 5.800 0 0 1 12 5a5.800 5.800 0 0 1 11 2.500C23 12 19 16 12 22z" fill="#e81224" stroke="#5c0a12" stroke-width="1.200"/></svg> for Your Success</span></div>
</footer>
</body>
</html>
